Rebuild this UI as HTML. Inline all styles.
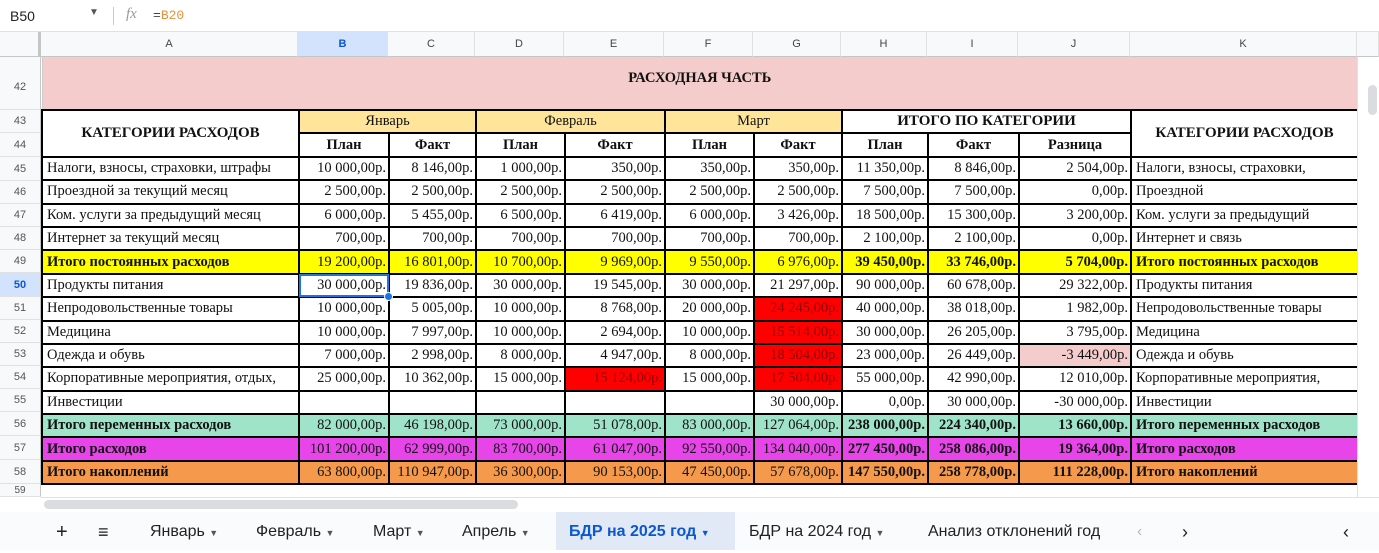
<!DOCTYPE html>
<html><head><meta charset="utf-8"><style>
*{box-sizing:border-box;margin:0;padding:0}
body{width:1379px;height:550px;overflow:hidden;background:#fff;font-family:"Liberation Sans",sans-serif;position:relative}
.fbar{position:absolute;left:0;top:0;width:1379px;height:32px;background:#fff;border-bottom:1px solid #e1e1e1}
.colh{position:absolute;top:32px;height:25px;background:#f8f9fa;border-bottom:1px solid #c4c7c5;border-right:1px solid #e1e1e1;font-size:11px;color:#444;text-align:center;line-height:25px}
.rowh{position:absolute;left:0;width:41px;background:#f8f9fa;border-right:1px solid #c4c7c5;border-bottom:1px solid #e1e1e1;font-size:11px;color:#555;text-align:center}
table{position:absolute;left:41px;top:57px;border-collapse:collapse;table-layout:fixed;font-family:"Liberation Serif",serif;font-size:14.5px;color:#111}
td{border:2.5px solid #000;white-space:nowrap;overflow:hidden;padding:0 2px;height:23.4px;text-align:right}
td.l{text-align:left;padding-left:4px}
td.c{text-align:center}
.b{font-weight:bold}
.tl{border-left:1px solid #555}
tr.y td{background:#ffff00;font-weight:bold}
tr.y td.n{font-weight:normal}
tr.g td{background:#9fe3c8}
tr.m td{background:#e744ea}
tr.o td{background:#f59a4c}
.r{background:#ff0000;color:#8b0000}
.tabs{position:absolute;left:0;top:512px;width:1379px;height:38px;background:#f9fbfd;font-size:16px;color:#222}
.tab{position:absolute;top:0;height:38px;line-height:40px}
</style></head><body>
<div class="fbar">
 <span style="position:absolute;left:10px;top:8px;font-size:14px;color:#222">B50</span>
 <span style="position:absolute;left:89px;top:7px;font-size:10px;color:#555">▼</span>
 <div style="position:absolute;left:113px;top:7px;width:1px;height:18px;background:#ccc"></div>
 <span style="position:absolute;left:126px;top:6px;font-size:15px;color:#999;font-style:italic;font-family:'Liberation Serif',serif">fx</span>
 <span style="position:absolute;left:153px;top:8px;font-size:13px;font-family:'Liberation Mono',monospace;color:#444">=<span style="color:#e69138">B20</span></span>
</div>
<div class="colh" style="left:0;width:41px;border-right:3px solid #c4c7c5"></div>
<div class="colh" style="left:41px;width:257px">A</div>
<div class="colh" style="left:298px;width:90px;background:#d3e3fd;font-weight:bold;color:#0b57d0">B</div>
<div class="colh" style="left:388px;width:87px">C</div>
<div class="colh" style="left:475px;width:89px">D</div>
<div class="colh" style="left:564px;width:100px">E</div>
<div class="colh" style="left:664px;width:89px">F</div>
<div class="colh" style="left:753px;width:88px">G</div>
<div class="colh" style="left:841px;width:86px">H</div>
<div class="colh" style="left:927px;width:91px">I</div>
<div class="colh" style="left:1018px;width:112px">J</div>
<div class="colh" style="left:1130px;width:227px">K</div>
<div class="colh" style="left:1357px;width:22px"></div>
<div class="rowh" style="top:57px;height:53px;line-height:60px">42</div>
<div class="rowh" style="top:110px;height:23px;line-height:23px">43</div>
<div class="rowh" style="top:133px;height:24px;line-height:24px">44</div>
<div class="rowh" style="top:157px;height:24px;line-height:24px">45</div>
<div class="rowh" style="top:181px;height:23px;line-height:23px">46</div>
<div class="rowh" style="top:204px;height:23px;line-height:23px">47</div>
<div class="rowh" style="top:227px;height:23px;line-height:23px">48</div>
<div class="rowh" style="top:250px;height:23px;line-height:23px">49</div>
<div class="rowh" style="top:273px;height:24px;line-height:24px;background:#d3e3fd;font-weight:bold;color:#0b57d0">50</div>
<div class="rowh" style="top:297px;height:23px;line-height:23px">51</div>
<div class="rowh" style="top:320px;height:23px;line-height:23px">52</div>
<div class="rowh" style="top:343px;height:23px;line-height:23px">53</div>
<div class="rowh" style="top:366px;height:23px;line-height:23px">54</div>
<div class="rowh" style="top:389px;height:23px;line-height:23px">55</div>
<div class="rowh" style="top:412px;height:24px;line-height:24px">56</div>
<div class="rowh" style="top:436px;height:24px;line-height:24px">57</div>
<div class="rowh" style="top:460px;height:24px;line-height:24px">58</div>
<div class="rowh" style="top:484px;height:13px;line-height:13px;font-size:10px">59</div>
<table>
<colgroup><col style="width:257px"><col style="width:90px"><col style="width:87px"><col style="width:89px"><col style="width:100px"><col style="width:89px"><col style="width:88px"><col style="width:86px"><col style="width:91px"><col style="width:112px"><col style="width:227px"></colgroup>
<tr><td colspan="11" class="c b" style="height:53px;background:#f4cccc;border-top:0;border-left:1px solid #ccc;padding-bottom:10px">РАСХОДНАЯ ЧАСТЬ</td></tr>
<tr><td rowspan="2" class="c b" style="font-size:15px">КАТЕГОРИИ РАСХОДОВ</td><td colspan="2" class="c" style="background:#ffe599">Январь</td><td colspan="2" class="c" style="background:#ffe599">Февраль</td><td colspan="2" class="c" style="background:#ffe599">Март</td><td colspan="3" class="c b" style="font-size:15px">ИТОГО ПО КАТЕГОРИИ</td><td rowspan="2" class="c b" style="font-size:15px">КАТЕГОРИИ РАСХОДОВ</td></tr>
<tr><td class="c b">План</td><td class="c b tl">Факт</td><td class="c b">План</td><td class="c b tl">Факт</td><td class="c b">План</td><td class="c b tl">Факт</td><td class="c b">План</td><td class="c b">Факт</td><td class="c b">Разница</td></tr>
<tr><td class="l">Налоги, взносы, страховки, штрафы</td><td>10 000,00р.</td><td class="tl">8 146,00р.</td><td>1 000,00р.</td><td class="tl">350,00р.</td><td>350,00р.</td><td class="tl">350,00р.</td><td>11 350,00р.</td><td>8 846,00р.</td><td>2 504,00р.</td><td class="l">Налоги, взносы, страховки,</td></tr>
<tr><td class="l">Проездной за текущий месяц</td><td>2 500,00р.</td><td class="tl">2 500,00р.</td><td>2 500,00р.</td><td class="tl">2 500,00р.</td><td>2 500,00р.</td><td class="tl">2 500,00р.</td><td>7 500,00р.</td><td>7 500,00р.</td><td>0,00р.</td><td class="l">Проездной</td></tr>
<tr><td class="l">Ком. услуги за предыдущий месяц</td><td>6 000,00р.</td><td class="tl">5 455,00р.</td><td>6 500,00р.</td><td class="tl">6 419,00р.</td><td>6 000,00р.</td><td class="tl">3 426,00р.</td><td>18 500,00р.</td><td>15 300,00р.</td><td>3 200,00р.</td><td class="l">Ком. услуги за предыдущий</td></tr>
<tr><td class="l">Интернет за текущий месяц</td><td>700,00р.</td><td class="tl">700,00р.</td><td>700,00р.</td><td class="tl">700,00р.</td><td>700,00р.</td><td class="tl">700,00р.</td><td>2 100,00р.</td><td>2 100,00р.</td><td>0,00р.</td><td class="l">Интернет и связь</td></tr>
<tr class="y"><td class="l">Итого постоянных расходов</td><td class="n">19 200,00р.</td><td class="n tl">16 801,00р.</td><td class="n">10 700,00р.</td><td class="n tl">9 969,00р.</td><td class="n">9 550,00р.</td><td class="n tl">6 976,00р.</td><td>39 450,00р.</td><td>33 746,00р.</td><td>5 704,00р.</td><td class="l">Итого постоянных расходов</td></tr>
<tr><td class="l">Продукты питания</td><td style="outline:2px solid #1a73e8;outline-offset:-2px">30 000,00р.</td><td class="tl">19 836,00р.</td><td>30 000,00р.</td><td class="tl">19 545,00р.</td><td>30 000,00р.</td><td class="tl">21 297,00р.</td><td>90 000,00р.</td><td>60 678,00р.</td><td>29 322,00р.</td><td class="l">Продукты питания</td></tr>
<tr><td class="l">Непродовольственные товары</td><td>10 000,00р.</td><td class="tl">5 005,00р.</td><td>10 000,00р.</td><td class="tl">8 768,00р.</td><td>20 000,00р.</td><td class="tl r">24 245,00р.</td><td>40 000,00р.</td><td>38 018,00р.</td><td>1 982,00р.</td><td class="l">Непродовольственные товары</td></tr>
<tr><td class="l">Медицина</td><td>10 000,00р.</td><td class="tl">7 997,00р.</td><td>10 000,00р.</td><td class="tl">2 694,00р.</td><td>10 000,00р.</td><td class="tl r">15 514,00р.</td><td>30 000,00р.</td><td>26 205,00р.</td><td>3 795,00р.</td><td class="l">Медицина</td></tr>
<tr><td class="l">Одежда и обувь</td><td>7 000,00р.</td><td class="tl">2 998,00р.</td><td>8 000,00р.</td><td class="tl">4 947,00р.</td><td>8 000,00р.</td><td class="tl r">18 504,00р.</td><td>23 000,00р.</td><td>26 449,00р.</td><td style="background:#f4cccc">-3 449,00р.</td><td class="l">Одежда и обувь</td></tr>
<tr><td class="l">Корпоративные мероприятия, отдых,</td><td>25 000,00р.</td><td class="tl">10 362,00р.</td><td>15 000,00р.</td><td class="tl r">15 124,00р.</td><td>15 000,00р.</td><td class="tl r">17 504,00р.</td><td>55 000,00р.</td><td>42 990,00р.</td><td>12 010,00р.</td><td class="l">Корпоративные мероприятия,</td></tr>
<tr><td class="l">Инвестиции</td><td></td><td class="tl"></td><td></td><td class="tl"></td><td></td><td class="tl">30 000,00р.</td><td>0,00р.</td><td>30 000,00р.</td><td>-30 000,00р.</td><td class="l">Инвестиции</td></tr>
<tr class="g"><td class="l b">Итого переменных расходов</td><td>82 000,00р.</td><td class="tl">46 198,00р.</td><td>73 000,00р.</td><td class="tl">51 078,00р.</td><td>83 000,00р.</td><td class="tl">127 064,00р.</td><td class="b">238 000,00р.</td><td class="b">224 340,00р.</td><td class="b">13 660,00р.</td><td class="l b">Итого переменных расходов</td></tr>
<tr class="m"><td class="l b">Итого расходов</td><td>101 200,00р.</td><td class="tl">62 999,00р.</td><td>83 700,00р.</td><td class="tl">61 047,00р.</td><td>92 550,00р.</td><td class="tl">134 040,00р.</td><td class="b">277 450,00р.</td><td class="b">258 086,00р.</td><td class="b">19 364,00р.</td><td class="l b">Итого расходов</td></tr>
<tr class="o"><td class="l b">Итого накоплений</td><td>63 800,00р.</td><td class="tl">110 947,00р.</td><td>36 300,00р.</td><td class="tl">90 153,00р.</td><td>47 450,00р.</td><td class="tl">57 678,00р.</td><td class="b">147 550,00р.</td><td class="b">258 778,00р.</td><td class="b">111 228,00р.</td><td class="l b">Итого накоплений</td></tr>
</table>
<div style="position:absolute;left:384px;top:292px;width:9px;height:9px;border-radius:50%;background:#1a73e8;border:1px solid #fff"></div>
<div style="position:absolute;left:1357px;top:57px;width:22px;height:440px;background:#fff;border-left:1px solid #e1e1e1"></div>
<div style="position:absolute;left:1368px;top:85px;width:9px;height:30px;border-radius:5px;background:#dadce0"></div>
<div style="position:absolute;left:41px;top:497px;width:1338px;height:15px;background:#fff;border-top:1px solid #e1e1e1"></div>
<div style="position:absolute;left:44px;top:500px;width:474px;height:9px;border-radius:5px;background:#dadce0"></div>
<div class="tabs">
 <span class="tab" style="left:56px;font-size:20px">+</span>
 <span class="tab" style="left:98px;font-size:18px">≡</span>
 <span class="tab" style="left:150px">Январь <small style="font-size:9px;color:#555">▼</small></span>
 <span class="tab" style="left:256px">Февраль <small style="font-size:9px;color:#555">▼</small></span>
 <span class="tab" style="left:373px">Март <small style="font-size:9px;color:#555">▼</small></span>
 <span class="tab" style="left:462px">Апрель <small style="font-size:9px;color:#555">▼</small></span>
 <span class="tab" style="left:556px;width:179px;background:#e1e9f7;color:#0b57d0;font-weight:bold;padding-left:13px">БДР на 2025 год <small style="font-size:9px">▼</small></span>
 <span class="tab" style="left:749px">БДР на 2024 год <small style="font-size:9px;color:#555">▼</small></span>
 <span class="tab" style="left:928px">Анализ отклонений год</span>
 <span class="tab" style="left:1137px;color:#bbb">‹</span>
 <span class="tab" style="left:1182px;font-size:18px">›</span>
 <span class="tab" style="left:1343px;font-size:18px">‹</span>
</div>
</body></html>
